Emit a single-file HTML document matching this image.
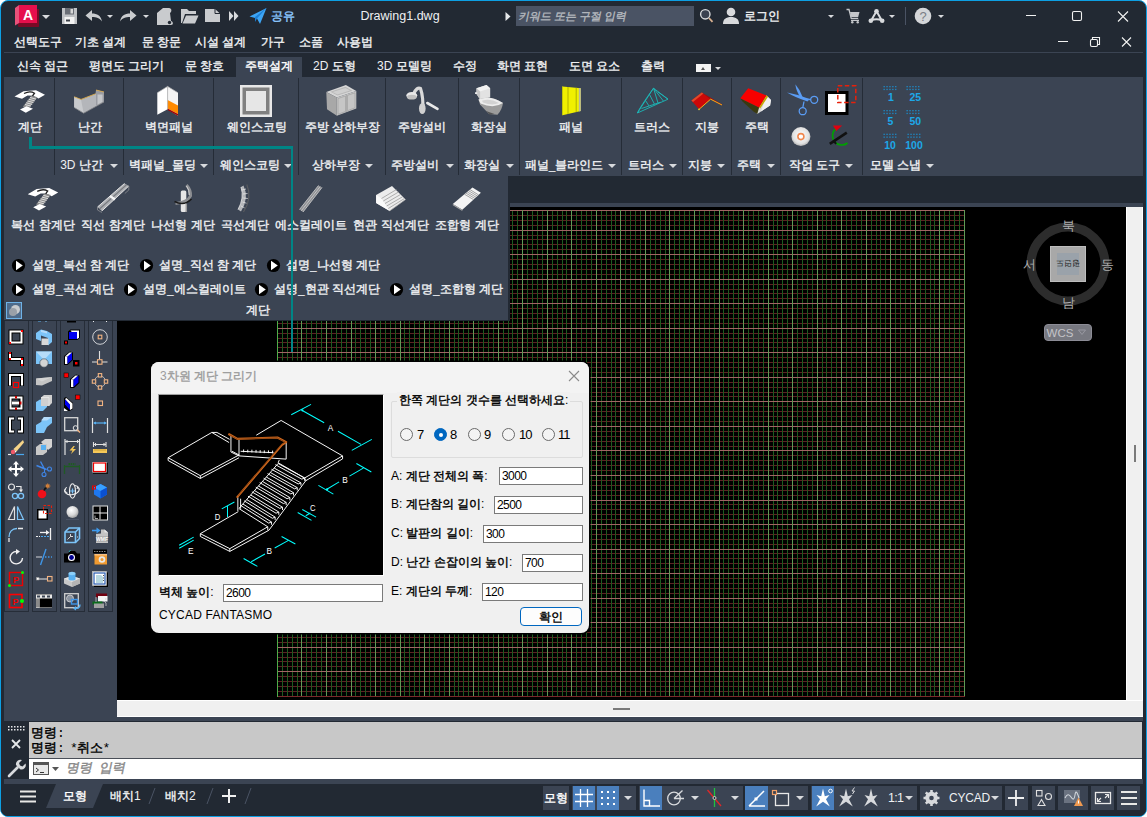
<!DOCTYPE html>
<html lang="ko">
<head>
<meta charset="utf-8">
<title>Drawing1.dwg</title>
<style>
html,body{margin:0;padding:0;background:#fff;}
body{width:1147px;height:817px;overflow:hidden;font-family:"Liberation Sans",sans-serif;font-size:12px;color:#eef0f2;}
#app{position:absolute;left:0;top:0;width:1145px;height:815px;background:#222933;border:1px solid #0d9fe3;border-radius:8px;overflow:hidden;}
#in{position:absolute;left:-1px;top:-1px;width:1147px;height:817px;}
.abs{position:absolute;}
.t{position:absolute;white-space:nowrap;text-align:center;line-height:16px;height:16px;font-size:12px;color:#eef0f2;overflow:visible;}
.l{text-align:left;}
.k{display:inline-block;width:1em;text-align:center;-webkit-text-stroke:0.4px currentColor;}
.cm .k{font-family:"Liberation Sans",sans-serif;letter-spacing:0;-webkit-text-stroke:0.45px currentColor;}
.pan{background:#3b4453;}
.sep{position:absolute;width:1px;background:#252c37;}
.dk{color:#000;}
svg{display:block;overflow:visible;}
.arr{position:absolute;width:0;height:0;border-left:4px solid transparent;border-right:4px solid transparent;border-top:4px solid #d8dadd;}
.arrs{position:absolute;width:0;height:0;border-left:3px solid transparent;border-right:3px solid transparent;border-top:3px solid #d8dadd;}
.inp{position:absolute;background:#fff;border:1px solid #7a7a7a;height:18px;box-sizing:border-box;font-size:12px;line-height:16px;color:#000;padding-left:2px;text-align:left;letter-spacing:-0.6px;}
.rb{position:absolute;width:13px;height:13px;border:1px solid #6a6a6a;border-radius:50%;background:#f4f4f4;box-sizing:border-box;}
.sb{position:absolute;top:786px;height:24px;background:#3b4453;}
.sbon{background:#4a7fbd;}
</style>
</head>
<body>
<div id="app"><div id="in">
<!-- ===== title bar ===== -->
<div class="abs" id="titlebar" style="left:1px;top:1px;width:1145px;height:37px;"></div>
<!-- app logo -->
<svg class="abs" style="left:14px;top:4px" width="28" height="25" viewBox="0 0 28 25">
<polygon points="3,19 24,19 25,23 4.5,23" fill="#7a0a26"/>
<polygon points="1,4 5,1 5,19 1,21.5" fill="#e8527a"/>
<rect x="5" y="1" width="18" height="18" fill="#e60f4c"/>
<rect x="23" y="5" width="2" height="17" fill="#7a0a26"/>
<text x="14" y="15.5" font-family="Liberation Sans, sans-serif" font-weight="bold" font-size="14" fill="#fff" text-anchor="middle">A</text>
</svg>
<div class="arr" style="left:42px;top:15px;"></div>
<!-- save -->
<svg class="abs" style="left:61px;top:7px" width="17" height="18" viewBox="0 0 17 18"><path d="M1 1h15v16H1z" fill="#bfc1c4"/><rect x="4" y="1" width="9" height="6.500" fill="#6a6e76"/><rect x="9.500" y="2" width="2.500" height="4.500" fill="#d8d8d8"/><rect x="3.500" y="10" width="10" height="7" fill="#f2f2f2"/><rect x="5" y="12.500" width="4" height="2" fill="#3a3e46"/></svg>
<!-- undo -->
<svg class="abs" style="left:85px;top:9px" width="18" height="14" viewBox="0 0 18 14"><path d="M0.5 6.5L7 1v3.5c5 0 9 2 10 8-2.5-3.5-5.5-4.5-10-4.5V12z" fill="#c9cbce"/></svg>
<div class="arrs" style="left:107px;top:15px;"></div>
<!-- redo -->
<svg class="abs" style="left:119px;top:9px" width="18" height="14" viewBox="0 0 18 14"><path d="M17.5 6.5L11 1v3.5c-5 0-9 2-10 8 2.500-3.500 5.500-4.500 10-4.500V12z" fill="#c9cbce"/></svg>
<div class="arrs" style="left:143px;top:15px;"></div>
<!-- roll -->
<svg class="abs" style="left:156px;top:7px" width="18" height="19" viewBox="0 0 18 19"><path d="M1 18V6l6-5h6c3 0 3 4 1 5l1 8c2 0 3 4 0 4z" fill="#c9cbce"/><circle cx="13.500" cy="15.500" r="1.700" fill="#222933"/></svg>
<!-- open -->
<svg class="abs" style="left:180px;top:8px" width="19" height="16" viewBox="0 0 19 16"><path d="M1 15V1h6l2 2h7v3H5l-3 9z" fill="#c9cbce"/><path d="M6 7.500h12.500l-3.500 8H2.500z" fill="#c9cbce"/></svg>
<!-- new doc -->
<svg class="abs" style="left:204px;top:8px" width="17" height="15" viewBox="0 0 17 15"><path d="M1 1h10l5 4.500V14H1z" fill="#c9cbce"/><path d="M11 1v4.500h5" fill="none" stroke="#222933" stroke-width="1"/></svg>
<!-- >> -->
<svg class="abs" style="left:229px;top:11px" width="10" height="10" viewBox="0 0 10 10"><path d="M0 0l4.500 5L0 10zM5 0l4.500 5L5 10z" fill="#d8dadd"/></svg>
<!-- share -->
<svg class="abs" style="left:249px;top:7px" width="18" height="18" viewBox="0 0 18 18"><path d="M0.500 9.500L17.500 1 11 17l-3-5.500z" fill="#3da5f5"/><path d="M8 11.500L17.500 1 6 10v5z" fill="#1b7fd6"/></svg>
<div class="t l" style="left:271px;top:8px;color:#8cc8ff;"><span class="k">공</span><span class="k">유</span></div>
<div class="t" style="left:340px;top:8px;width:120px;color:#eef0f2;font-size:12.500px;">Drawing1.dwg</div>
<svg class="abs" style="left:505px;top:12px" width="6" height="9" viewBox="0 0 6 9"><path d="M0.500 0l5 4.500-5 4.500z" fill="#e6e8ea"/></svg>
<!-- search box -->
<div class="abs" style="left:516px;top:6px;width:178px;height:20px;background:#4a5364;"></div>
<div class="t l" style="left:519px;top:8px;color:#b4b8be;font-size:11px;transform:skewX(-12deg);"><span class="k">키</span><span class="k">워</span><span class="k">드</span> <span class="k">또</span><span class="k">는</span> <span class="k">구</span><span class="k">절</span> <span class="k">입</span><span class="k">력</span></div>
<svg class="abs" style="left:699px;top:8px" width="17" height="17" viewBox="0 0 17 17"><circle cx="6.300" cy="6.300" r="4.700" fill="#3a4150" stroke="#d8dadd" stroke-width="1.400"/><path d="M10 10l3.500 3.800" stroke="#d8b090" stroke-width="1.800"/></svg>
<!-- user -->
<svg class="abs" style="left:722px;top:7px" width="18" height="17" viewBox="0 0 18 17"><circle cx="9" cy="5" r="4.300" fill="#d8dadd"/><path d="M1 17c0-5 3-7 8-7s8 2 8 7z" fill="#d8dadd"/></svg>
<div class="t l" style="left:744px;top:8px;"><span class="k">로</span><span class="k">그</span><span class="k">인</span></div>
<div class="arrs" style="left:828px;top:15px;"></div>
<!-- cart -->
<svg class="abs" style="left:845px;top:7px" width="17" height="18" viewBox="0 0 17 18"><path d="M1.500 2.500h2.500l2.200 8.800h7" fill="none" stroke="#c4c6ca" stroke-width="1.300"/><path d="M5 5h9.500l-1.300 5h-7z" fill="#c4c6ca"/><path d="M6 13.300h8" stroke="#c4c6ca" stroke-width="1.200"/><circle cx="7.300" cy="15.300" r="1.200" fill="#c4c6ca"/><circle cx="12.700" cy="15.300" r="1.200" fill="#c4c6ca"/></svg>
<!-- autodesk A -->
<svg class="abs" style="left:867px;top:7px" width="18" height="18" viewBox="0 0 18 18"><path d="M9.500 4.300L4 13.700Q9.500 11 15 13.700z" fill="none" stroke="#d8dadd" stroke-width="2" stroke-linejoin="round"/><circle cx="9.500" cy="4.300" r="2.300" fill="#d8dadd"/><circle cx="3.800" cy="13.800" r="2.300" fill="#d8dadd"/><circle cx="15.200" cy="13.800" r="2.300" fill="#d8dadd"/></svg>
<div class="arrs" style="left:889px;top:15px;"></div>
<div class="abs" style="left:905px;top:7px;width:1px;height:18px;background:#4a5364;"></div>
<!-- help -->
<svg class="abs" style="left:914px;top:7px" width="18" height="18" viewBox="0 0 18 18"><circle cx="9" cy="9" r="8.300" fill="#d4d6d9"/><text x="9" y="13.500" font-family="Liberation Sans, sans-serif" font-size="13" fill="#7a7e86" text-anchor="middle">?</text></svg>
<div class="arrs" style="left:938px;top:15px;"></div>
<!-- window controls -->
<svg class="abs" style="left:1020px;top:6px" width="120" height="22" viewBox="0 0 120 22" fill="none" stroke="#f2f2f2" stroke-width="1.100"><path d="M6 9.500h10"/><rect x="52.500" y="5.500" width="9" height="9" rx="1.500"/><path d="M98 5.500l10 10M108 5.500l-10 10"/></svg>
<!-- ===== menu row ===== -->
<div class="t l" style="left:14px;top:34px;"><span class="k">선</span><span class="k">택</span><span class="k">도</span><span class="k">구</span></div>
<div class="t l" style="left:75px;top:34px;"><span class="k">기</span><span class="k">초</span> <span class="k">설</span><span class="k">계</span></div>
<div class="t l" style="left:142px;top:34px;"><span class="k">문</span> <span class="k">창</span><span class="k">문</span></div>
<div class="t l" style="left:195px;top:34px;"><span class="k">시</span><span class="k">설</span> <span class="k">설</span><span class="k">계</span></div>
<div class="t l" style="left:261px;top:34px;"><span class="k">가</span><span class="k">구</span></div>
<div class="t l" style="left:299px;top:34px;"><span class="k">소</span><span class="k">품</span></div>
<div class="t l" style="left:337px;top:34px;"><span class="k">사</span><span class="k">용</span><span class="k">법</span></div>
<svg class="abs" style="left:1055px;top:34px" width="85" height="16" viewBox="0 0 85 16" fill="none" stroke="#f2f2f2" stroke-width="1.100"><path d="M3 7.500h10"/><rect x="35.500" y="5.500" width="7" height="7" rx="1.500"/><path d="M37.500 5.500v-2h7v7h-2"/><path d="M67 3.500l9 9M76 3.500l-9 9"/></svg>
<div class="abs" style="left:4px;top:52px;width:1139px;height:1px;background:#3b4453;"></div>
<!-- ===== tab row ===== -->
<div class="abs pan" style="left:236px;top:57px;width:66px;height:21px;"></div>
<div class="t l" style="left:17px;top:58px;"><span class="k">신</span><span class="k">속</span> <span class="k">접</span><span class="k">근</span></div>
<div class="t l" style="left:89px;top:58px;"><span class="k">평</span><span class="k">면</span><span class="k">도</span> <span class="k">그</span><span class="k">리</span><span class="k">기</span></div>
<div class="t l" style="left:185px;top:58px;"><span class="k">문</span> <span class="k">창</span><span class="k">호</span></div>
<div class="t l" style="left:245px;top:58px;color:#fff;"><span class="k">주</span><span class="k">택</span><span class="k">설</span><span class="k">계</span></div>
<div class="t l" style="left:313px;top:58px;">2D <span class="k">도</span><span class="k">형</span></div>
<div class="t l" style="left:377px;top:58px;">3D <span class="k">모</span><span class="k">델</span><span class="k">링</span></div>
<div class="t l" style="left:453px;top:58px;"><span class="k">수</span><span class="k">정</span></div>
<div class="t l" style="left:497px;top:58px;"><span class="k">화</span><span class="k">면</span> <span class="k">표</span><span class="k">현</span></div>
<div class="t l" style="left:569px;top:58px;"><span class="k">도</span><span class="k">면</span> <span class="k">요</span><span class="k">소</span></div>
<div class="t l" style="left:641px;top:58px;"><span class="k">출</span><span class="k">력</span></div>
<div class="abs" style="left:696px;top:64px;width:15px;height:8px;background:#f4f4f4;"></div>
<div class="abs" style="left:701px;top:66.500px;width:0;height:0;border-left:2.500px solid transparent;border-right:2.500px solid transparent;border-bottom:3px solid #555;"></div>
<div class="arrs" style="left:715px;top:67px;"></div>
<!-- ===== ribbon ===== -->
<div class="abs pan" style="left:4px;top:77px;width:1139px;height:99px;"></div>
<div class="sep" style="left:54px;top:78px;height:97px;"></div>
<div class="sep" style="left:123px;top:78px;height:97px;"></div>
<div class="sep" style="left:213px;top:78px;height:97px;"></div>
<div class="sep" style="left:298px;top:78px;height:97px;"></div>
<div class="sep" style="left:385px;top:78px;height:97px;"></div>
<div class="sep" style="left:458px;top:78px;height:97px;"></div>
<div class="sep" style="left:519px;top:78px;height:97px;"></div>
<div class="sep" style="left:621px;top:78px;height:97px;"></div>
<div class="sep" style="left:682px;top:78px;height:97px;"></div>
<div class="sep" style="left:731px;top:78px;height:97px;"></div>
<div class="sep" style="left:780px;top:78px;height:97px;"></div>
<div class="sep" style="left:862px;top:78px;height:97px;"></div>
<!-- big button labels -->
<div class="t" style="left:5px;top:119px;width:50px;"><span class="k">계</span><span class="k">단</span></div>
<div class="t" style="left:56px;top:119px;width:67px;"><span class="k">난</span><span class="k">간</span></div>
<div class="t" style="left:124px;top:119px;width:89px;"><span class="k">벽</span><span class="k">면</span><span class="k">패</span><span class="k">널</span></div>
<div class="t" style="left:214px;top:119px;width:85px;"><span class="k">웨</span><span class="k">인</span><span class="k">스</span><span class="k">코</span><span class="k">팅</span></div>
<div class="t" style="left:300px;top:119px;width:85px;"><span class="k">주</span><span class="k">방</span> <span class="k">상</span><span class="k">하</span><span class="k">부</span><span class="k">장</span></div>
<div class="t" style="left:386px;top:119px;width:72px;"><span class="k">주</span><span class="k">방</span><span class="k">설</span><span class="k">비</span></div>
<div class="t" style="left:459px;top:119px;width:60px;"><span class="k">화</span><span class="k">장</span><span class="k">실</span></div>
<div class="t" style="left:520px;top:119px;width:101px;"><span class="k">패</span><span class="k">널</span></div>
<div class="t" style="left:622px;top:119px;width:60px;"><span class="k">트</span><span class="k">러</span><span class="k">스</span></div>
<div class="t" style="left:683px;top:119px;width:48px;"><span class="k">지</span><span class="k">붕</span></div>
<div class="t" style="left:732px;top:119px;width:49px;"><span class="k">주</span><span class="k">택</span></div>
<!-- panel titles -->
<div class="t" style="left:54px;top:157px;width:55px;">3D <span class="k">난</span><span class="k">간</span></div><div class="arr" style="left:110px;top:164px;"></div>
<div class="t" style="left:124px;top:157px;width:77px;"><span class="k">벽</span><span class="k">패</span><span class="k">널</span>_<span class="k">몰</span><span class="k">딩</span></div><div class="arr" style="left:200px;top:164px;"></div>
<div class="t" style="left:214px;top:157px;width:71px;"><span class="k">웨</span><span class="k">인</span><span class="k">스</span><span class="k">코</span><span class="k">팅</span></div><div class="arr" style="left:284px;top:164px;"></div>
<div class="t" style="left:306px;top:157px;width:59px;"><span class="k">상</span><span class="k">하</span><span class="k">부</span><span class="k">장</span></div><div class="arr" style="left:365px;top:164px;"></div>
<div class="t" style="left:385px;top:157px;width:59px;"><span class="k">주</span><span class="k">방</span><span class="k">설</span><span class="k">비</span></div><div class="arr" style="left:446px;top:164px;"></div>
<div class="t" style="left:459px;top:157px;width:46px;"><span class="k">화</span><span class="k">장</span><span class="k">실</span></div><div class="arr" style="left:506px;top:164px;"></div>
<div class="t" style="left:521px;top:157px;width:86px;"><span class="k">패</span><span class="k">널</span>_<span class="k">블</span><span class="k">라</span><span class="k">인</span><span class="k">드</span></div><div class="arr" style="left:608px;top:164px;"></div>
<div class="t" style="left:623px;top:157px;width:46px;"><span class="k">트</span><span class="k">러</span><span class="k">스</span></div><div class="arr" style="left:669px;top:164px;"></div>
<div class="t" style="left:683px;top:157px;width:33px;"><span class="k">지</span><span class="k">붕</span></div><div class="arr" style="left:717px;top:164px;"></div>
<div class="t" style="left:732px;top:157px;width:33px;"><span class="k">주</span><span class="k">택</span></div><div class="arr" style="left:767px;top:164px;"></div>
<div class="t" style="left:784px;top:157px;width:61px;"><span class="k">작</span><span class="k">업</span> <span class="k">도</span><span class="k">구</span></div><div class="arr" style="left:845px;top:164px;"></div>
<div class="t" style="left:865px;top:157px;width:61px;"><span class="k">모</span><span class="k">델</span> <span class="k">스</span><span class="k">냅</span></div><div class="arr" style="left:926px;top:164px;"></div>
<!-- ribbon icons placeholder -->
<svg class="abs" style="left:0;top:78px" width="960" height="80" viewBox="0 78 960 80">
<defs>
<g id="stair1">
<path d="M14.500 96.500L23.500 91.200 36 90.300 45 94.800 38.500 98.500 33 95.800 27.500 95.600 22 98.700z" fill="#fff"/>
<path d="M31.500 95.500L37.500 97.200 28.500 108.500 22.800 106.800z" fill="#8c8c8c"/>
<path d="M30 97.500l6 1.600M28.800 99.300l6 1.600M27.500 101l6 1.600M26.200 102.800l6 1.600M25 104.500l6 1.600" stroke="#e8e8e8" stroke-width="0.900"/>
<path d="M20 109.500L26.500 106.300 33 108.800 25.800 112.800z" fill="#fff"/>
<path d="M24 93.500Q30 90.500 34.500 93.200L32.500 96" fill="none" stroke="#222" stroke-width="1.300"/>
</g>
</defs>
<use href="#stair1"/>
<!-- railing -->
<path d="M74.200 96.800L81 99.400 95.600 93.800 96 90 104 92V102L83.700 113.200 74.200 107.500z" fill="#b4b6ba"/>
<path d="M81 99.400L83.700 113.200 74.200 107.500 74.200 96.800z" fill="#c8cacd"/>
<path d="M96 90l8 2v10l-8 3.500z" fill="#9a9ca2"/>
<path d="M97.500 94.500h5v7.500l-5 2.500z" fill="#c4c6c9"/>
<path d="M74.200 96.800L81 99.400 95.600 93.800M96 90l8 2" fill="none" stroke="#d8a848" stroke-width="0.900"/>
<path d="M74.200 107.500l9.500 5.700L104 102" fill="none" stroke="#7a7c80" stroke-width="0.800"/>
<!-- wall panel -->
<path d="M157.300 92.800L167.600 86.400V109.300L157.300 114.800z" fill="#fff"/>
<path d="M167.600 86.400L178 92.800V115.700L167.600 109.300z" fill="#f4f4f4"/>
<path d="M167.600 100.100L178 105.600V113.900L167.600 108.400z" fill="#ff8a00"/>
<path d="M167.600 108.400L178 113.900V115.700L167.600 109.900z" fill="#a00000"/>
<path d="M157.300 92.800L167.600 86.400 178 92.800M167.600 86.400V109.300" fill="none" stroke="#b8b8b8" stroke-width="0.700"/>
<!-- wainscoting -->
<rect x="240" y="85" width="32" height="32" fill="#e8e8e8"/>
<rect x="242.500" y="87.500" width="27" height="27" fill="#808080"/>
<rect x="246" y="91" width="20" height="20" fill="#e6e6e6"/>
<!-- kitchen cabinet -->
<path d="M326.300 91.900L345.900 85.100 356.300 91 336.800 97.400z" fill="#d6d6d6"/>
<path d="M330.500 91.800L345.500 86.800 352.500 90.800 337.500 95.600z" fill="#b8b8b8"/>
<path d="M332.500 92L345.500 88 350 90.600 337.500 94.600z" fill="#cfcfcf"/>
<path d="M336.800 97.400L356.300 91V108.400L336.800 115.700z" fill="#c6c6c6"/>
<path d="M326.300 91.900L336.800 97.400V115.700L327 109.300z" fill="#a8a8a8"/>
<path d="M346.500 94.500V112M338 98.500L345.500 96V111.500L338 114.300zM347.500 95.300L355 92.800V107.800L347.500 110.700z" fill="none" stroke="#a0a0a0" stroke-width="0.700"/>
<!-- faucet -->
<path d="M413.500 94Q417 86.500 420.500 88.500 423.500 97 422.800 111" fill="none" stroke="#dadada" stroke-width="3.200" stroke-linecap="round"/>
<ellipse cx="422.300" cy="108.500" rx="3.300" ry="5.500" fill="#d0d0d0"/>
<ellipse cx="411.800" cy="95.500" rx="5.500" ry="3.500" fill="#e8e8e8"/>
<ellipse cx="411.800" cy="97.200" rx="4.800" ry="2.400" fill="#c0c0c0"/>
<path d="M427.300 103L437.500 108.800" stroke="#e8e8e8" stroke-width="2.600" stroke-linecap="round"/>
<!-- toilet -->
<path d="M476.500 88.200L486.500 85.100 490.200 88.200V97.400L480.100 99.500 476.500 94z" fill="#e2e2e2"/>
<path d="M476.500 88.200L486.500 85.100 490.200 88.200 480.100 91.500z" fill="#f2f2f2"/>
<path d="M480.100 91.500V99.500L476.500 94V88.200z" fill="#c4c4c4"/>
<path d="M478.500 99.500Q490 94.500 503 103 502 110 497.500 114.800L489 114 480 104.500z" fill="#9c9c9c"/>
<path d="M478.500 99.500Q490 94.500 503 103 494 109 480.500 103.500z" fill="#ececec"/>
<path d="M482 100.700Q490 97.800 499 103 492 106 483 102.500z" fill="#d2d2d2"/>
<path d="M486 111l3.500 3.500 5-0.500z" fill="#555"/>
<rect x="475" y="92.300" width="2.200" height="1.600" fill="#f4f4f4"/>
<!-- yellow panel -->
<path d="M562.500 86.400L580.800 88.200V111.100L562.500 115.200z" fill="#f0f000"/>
<path d="M578.800 88V111.600L580.800 111.100V88.200z" fill="#b8b89a"/>
<path d="M568 87V114M576.200 87.800V112.100" stroke="#a8a800" stroke-width="0.900"/>
<path d="M562.500 86.400V115.200" stroke="#d0d000" stroke-width="0.800"/>
<!-- truss -->
<g fill="none" stroke="#1cb8b8" stroke-width="0.900">
<path d="M637.400 113L653.500 88.200 668 99.200z"/>
<path d="M637.400 113Q640 107 653.500 88.200M641.500 108.500L660.500 102.200M645.500 100.500L649 106M649.500 94.500L654.500 104.200M653.500 88.200L658 103M653.500 88.200L663.500 101.200M658 92L668 99.200"/>
</g>
<!-- roof -->
<path d="M691.400 100.500L701.800 92.400 710.600 99.200 699.100 109.300z" fill="#cc0808"/>
<path d="M691.400 100.500L701.800 92.400 703.500 93.500 693 102z" fill="#e04a2a"/>
<path d="M701.800 92.400L722.500 104.700 721.300 105.300 710.600 99.200z" fill="#b80000"/>
<path d="M699.100 109.300L710.600 99.200 722 105" fill="none" stroke="#e8b820" stroke-width="1"/>
<circle cx="699" cy="109.300" r="0.900" fill="#e8d020"/>
<!-- house -->
<path d="M759.100 107.500L766.500 95.600 771 100.100 770.100 105.600 757.300 113.900 754.600 111.100z" fill="#d8d8d8"/>
<path d="M766.500 95.600L771 100.100 770.100 105.600 761 111.500z" fill="#f0f0f0"/>
<path d="M740.300 98.300L759.100 107.500 757.300 113.900 753.500 111.500 742.500 101.500z" fill="#3a3a10"/>
<path d="M740.300 98.300L748.200 88.200 766.500 95.600 759.100 107.500z" fill="#f80000"/>
<path d="M759.100 107.500L766.500 95.600 768.200 96.500 760.200 108.500z" fill="#c8a800"/>
<!-- scissors -->
<g fill="none" stroke="#5a9cf4" stroke-width="1.300">
<circle cx="814.200" cy="99.800" r="3.500"/><circle cx="802.700" cy="111.200" r="3.500"/>
<path d="M810.800 99.500L805 99.300M802.800 107.700L804 101.500"/>
</g>
<path d="M795.300 84.300Q799.500 89 802.500 96.800L801 98.500Q796 91 795.300 84.300z" fill="#5a9cf4"/>
<path d="M787 92.600Q798 94.500 809.500 99L807.500 101.500Q795 97.500 787 92.600z" fill="#5a9cf4"/>
<!-- white square + dashed -->
<rect x="825" y="91" width="23.500" height="24" fill="#000"/>
<rect x="828" y="94" width="17.500" height="18" fill="#fff"/>
<rect x="837.800" y="85.800" width="18" height="16.800" fill="none" stroke="#e8200a" stroke-width="1.500" stroke-dasharray="4.500 2.500"/>
<!-- CD -->
<defs><radialGradient id="cdg" cx="0.500" cy="0.450" r="0.550"><stop offset="0" stop-color="#fff"/><stop offset="0.750" stop-color="#e2e2e2"/><stop offset="1" stop-color="#b0b0b0"/></radialGradient></defs>
<circle cx="800.900" cy="136.600" r="9.500" fill="url(#cdg)"/>
<circle cx="800.900" cy="136.600" r="3" fill="#fff" stroke="#f08850" stroke-width="1.600"/>
<!-- rotate -->
<path d="M836 128.500A8.700 8.700 0 1 0 847.500 143" fill="none" stroke="#00a000" stroke-width="1.700"/>
<path d="M833 125.400H842.200L836.300 131z" fill="#e00010"/>
<path d="M829.800 143.800L846.800 132.600" stroke="#111" stroke-width="2.600"/>
<path d="M833.500 140l2.500 4" stroke="#111" stroke-width="2"/>
<!-- snap numbers -->
<g fill="#1d8ac8">
<g id="dots"><rect x="883.500" y="86" width="1.300" height="1.300"/><rect x="886.400" y="86" width="1.300" height="1.300"/><rect x="889.300" y="86" width="1.300" height="1.300"/><rect x="892.200" y="86" width="1.300" height="1.300"/><rect x="895.100" y="86" width="1.300" height="1.300"/><rect x="883.500" y="88.800" width="1.300" height="1.300"/><rect x="886.400" y="88.800" width="1.300" height="1.300"/><rect x="889.300" y="88.800" width="1.300" height="1.300"/><rect x="892.200" y="88.800" width="1.300" height="1.300"/><rect x="895.100" y="88.800" width="1.300" height="1.300"/></g>
<use href="#dots" x="23"/><use href="#dots" y="24"/><use href="#dots" x="23" y="24"/><use href="#dots" y="47.700"/><use href="#dots" x="24" y="47.700"/>
</g>
<g font-family="Liberation Sans, sans-serif" font-weight="bold" font-size="10.500" fill="#1da8e8" text-anchor="middle">
<text x="891" y="100.500">1</text><text x="915.300" y="100.500">25</text>
<text x="890.300" y="125">5</text><text x="915.300" y="125">50</text>
<text x="890" y="148.700">10</text><text x="914" y="148.700">100</text>
</g>
</svg>

<!-- canvas --><!-- ===== drawing area ===== -->
<div class="abs pan" style="left:4px;top:203px;width:1139px;height:4px;"></div>
<div class="abs" style="left:117px;top:207px;width:1009px;height:493px;background:#000;"></div>
<svg class="abs" style="left:0;top:0" width="1147" height="817" shape-rendering="crispEdges" fill="none"><path stroke="#5c2222" d="M277 215.5H965M277 220.5H965M277 225.5H965M277 235.5H965M277 239.5H965M277 244.5H965M277 249.5H965M277 259.5H965M277 264.5H965M277 269.5H965M277 274.5H965M277 284.5H965M277 289.5H965M277 293.5H965M277 298.5H965M277 308.5H965M277 313.5H965M277 318.5H965M277 323.5H965M277 333.5H965M277 338.5H965M277 342.5H965M277 347.5H965M277 357.5H965M277 362.5H965M277 367.5H965M277 372.5H965M277 382.5H965M277 387.5H965M277 392.5H965M277 396.5H965M277 406.5H965M277 411.5H965M277 416.5H965M277 421.5H965M277 431.5H965M277 436.5H965M277 441.5H965M277 446.5H965M277 455.5H965M277 460.5H965M277 465.5H965M277 470.5H965M277 480.5H965M277 485.5H965M277 490.5H965M277 495.5H965M277 504.5H965M277 509.5H965M277 514.5H965M277 519.5H965M277 529.5H965M277 534.5H965M277 539.5H965M277 544.5H965M277 553.5H965M277 558.5H965M277 563.5H965M277 568.5H965M277 578.5H965M277 583.5H965M277 588.5H965M277 593.5H965M277 603.5H965M277 607.5H965M277 612.5H965M277 617.5H965M277 627.5H965M277 632.5H965M277 637.5H965M277 642.5H965M277 652.5H965M277 657.5H965M277 661.5H965M277 666.5H965M277 676.5H965M277 681.5H965M277 686.5H965M277 691.5H965"/><path stroke="#1f5a1f" d="M282.5 210V697M287.5 210V697M292.5 210V697M297.5 210V697M306.5 210V697M311.5 210V697M316.5 210V697M321.5 210V697M331.5 210V697M336.5 210V697M341.5 210V697M346.5 210V697M355.5 210V697M360.5 210V697M365.5 210V697M370.5 210V697M380.5 210V697M385.5 210V697M390.5 210V697M395.5 210V697M404.5 210V697M409.5 210V697M414.5 210V697M419.5 210V697M429.5 210V697M434.5 210V697M439.5 210V697M444.5 210V697M454.5 210V697M458.5 210V697M463.5 210V697M468.5 210V697M478.5 210V697M483.5 210V697M488.5 210V697M493.5 210V697M503.5 210V697M508.5 210V697M512.5 210V697M517.5 210V697M527.5 210V697M532.5 210V697M537.5 210V697M542.5 210V697M552.5 210V697M557.5 210V697M562.5 210V697M566.5 210V697M576.5 210V697M581.5 210V697M586.5 210V697M591.5 210V697M601.5 210V697M606.5 210V697M611.5 210V697M615.5 210V697M625.5 210V697M630.5 210V697M635.5 210V697M640.5 210V697M650.5 210V697M655.5 210V697M660.5 210V697M665.5 210V697M674.5 210V697M679.5 210V697M684.5 210V697M689.5 210V697M699.5 210V697M704.5 210V697M709.5 210V697M714.5 210V697M723.5 210V697M728.5 210V697M733.5 210V697M738.5 210V697M748.5 210V697M753.5 210V697M758.5 210V697M763.5 210V697M773.5 210V697M777.5 210V697M782.5 210V697M787.5 210V697M797.5 210V697M802.5 210V697M807.5 210V697M812.5 210V697M822.5 210V697M826.5 210V697M831.5 210V697M836.5 210V697M846.5 210V697M851.5 210V697M856.5 210V697M861.5 210V697M871.5 210V697M876.5 210V697M880.5 210V697M885.5 210V697M895.5 210V697M900.5 210V697M905.5 210V697M910.5 210V697M920.5 210V697M925.5 210V697M930.5 210V697M934.5 210V697M944.5 210V697M949.5 210V697M954.5 210V697M959.5 210V697"/><path stroke="#a06464" d="M277 210.5H965M277 230.5H965M277 254.5H965M277 279.5H965M277 303.5H965M277 328.5H965M277 352.5H965M277 377.5H965M277 401.5H965M277 426.5H965M277 450.5H965M277 475.5H965M277 500.5H965M277 524.5H965M277 549.5H965M277 573.5H965M277 598.5H965M277 622.5H965M277 647.5H965M277 671.5H965M277 696.5H965"/><path stroke="#5f9a55" d="M277.5 210V697M301.5 210V697M326.5 210V697M351.5 210V697M375.5 210V697M400.5 210V697M424.5 210V697M449.5 210V697M473.5 210V697M498.5 210V697M522.5 210V697M547.5 210V697M571.5 210V697M596.5 210V697M620.5 210V697M645.5 210V697M669.5 210V697M694.5 210V697M719.5 210V697M743.5 210V697M768.5 210V697M792.5 210V697M817.5 210V697M841.5 210V697M866.5 210V697M890.5 210V697M915.5 210V697M939.5 210V697M964.5 210V697"/><path stroke="#7a2a2a" d="M277 696.5H965"/><path stroke="#4fae4a" d="M277.5 210V697"/></svg><!-- scrollbars -->
<div class="abs" style="left:1126px;top:207px;width:17px;height:510px;background:#f0f0f0;border-left:1px solid #fff;border-right:1px solid #fff;box-sizing:border-box;"></div>
<div class="abs" style="left:117px;top:700px;width:1026px;height:17px;background:#f0f0f0;border-top:1px solid #fff;border-bottom:1px solid #fff;box-sizing:border-box;"></div>
<div class="abs" style="left:613px;top:708px;width:17px;height:2px;background:#7a7a7a;"></div>
<div class="abs" style="left:1134px;top:445px;width:2px;height:17px;background:#7a7a7a;"></div>
<!-- viewcube -->
<svg class="abs" style="left:1015px;top:212px" width="110" height="135" viewBox="0 0 110 135">
<circle cx="53" cy="52" r="37" fill="none" stroke="#2c2c2c" stroke-width="9"/>
<rect x="35.500" y="34.500" width="35" height="35" fill="#a8a8a8" stroke="#bdbdbd" stroke-width="1"/>
<rect x="42" y="41" width="22" height="22" fill="#9aa2aa"/>
<text x="53" y="56" font-family="Liberation Sans, sans-serif" font-size="8" fill="#222" text-anchor="middle" transform="rotate(180 53 52.500)">평면도</text>
<text x="53" y="18" font-family="Liberation Sans, sans-serif" font-size="13" fill="#b0b0b0" text-anchor="middle">북</text>
<text x="53" y="95" font-family="Liberation Sans, sans-serif" font-size="13" fill="#b0b0b0" text-anchor="middle">남</text>
<text x="14" y="57" font-family="Liberation Sans, sans-serif" font-size="13" fill="#b0b0b0" text-anchor="middle">서</text>
<text x="92" y="57" font-family="Liberation Sans, sans-serif" font-size="13" fill="#b0b0b0" text-anchor="middle">동</text>
<rect x="29.500" y="112.500" width="47" height="16" rx="3.500" fill="#777880" stroke="#8c8c96"/>
<text x="45" y="125" font-family="Liberation Sans, sans-serif" font-size="11.500" fill="#c4c4c8" text-anchor="middle">WCS</text>
<path d="M63.500 118h7l-3.500 4.500z" fill="none" stroke="#a0a0a8" stroke-width="0.800"/>
</svg>
<!-- ===== left toolbars ===== -->
<div class="abs pan" style="left:4px;top:320px;width:113px;height:400px;"></div>
<div class="abs" style="left:4px;top:318px;width:25px;height:294px;border:1px solid #262d38;box-sizing:border-box;"></div>
<div class="abs" style="left:32px;top:318px;width:25px;height:294px;border:1px solid #262d38;box-sizing:border-box;"></div>
<div class="abs" style="left:60px;top:318px;width:25px;height:294px;border:1px solid #262d38;box-sizing:border-box;"></div>
<div class="abs" style="left:88px;top:318px;width:25px;height:294px;border:1px solid #262d38;box-sizing:border-box;"></div>
<svg class="abs" style="left:0;top:320px" width="120" height="300" viewBox="0 320 120 300"><rect x="38" y="320.500" width="3" height="1" fill="#58b0f0"/><rect x="45" y="320.500" width="2" height="1" fill="#7cc4f8"/><rect x="67" y="320" width="9" height="2.500" fill="#000"/><rect x="93" y="321" width="1" height="1" fill="#eee"/><rect x="106" y="321" width="1" height="1" fill="#eee"/><g transform="translate(8 329)"><rect x="0.5" y="0.5" width="15" height="15" fill="#000"/><rect x="1.500" y="1.500" width="13" height="13" fill="#fff"/><rect x="3.500" y="3.500" width="9" height="9" fill="#000"/><rect x="4.500" y="4.500" width="7" height="7" fill="#3b4453"/><rect x="13" y="1" width="2" height="2" fill="#f00"/><rect x="1" y="13" width="2" height="2" fill="#f00"/></g><g transform="translate(8 351)"><path d="M2 1v7h12v7" stroke="#000" stroke-width="4" fill="none"/><path d="M2 1.500v6.500h12v6.500" stroke="#fff" stroke-width="2" fill="none"/><rect x="1" y="1" width="2" height="2" fill="#f00"/><rect x="1" y="7" width="2" height="2" fill="#f00"/><rect x="13" y="7" width="2" height="2" fill="#f00"/><rect x="13" y="13" width="2" height="2" fill="#f00"/></g><g transform="translate(8 373)"><path d="M2 13V2h12v11" stroke="#000" stroke-width="4" fill="none"/><path d="M2 12.500V2h12v10.500" stroke="#fff" stroke-width="2" fill="none"/><rect x="5.500" y="9.500" width="5" height="5" fill="#3b4453" stroke="#f00" stroke-width="1.200"/></g><g transform="translate(8 395)"><rect x="0.500" y="0.500" width="15" height="15" fill="#000"/><rect x="1.500" y="1.500" width="13" height="13" fill="#fff"/><rect x="3.500" y="3.500" width="9" height="9" fill="#000"/><rect x="4" y="6.500" width="7" height="3" fill="#fff"/><rect x="4.500" y="4.500" width="6" height="1.500" fill="#3b4453"/><rect x="4.500" y="10" width="6" height="1.500" fill="#3b4453"/><rect x="7" y="1" width="2" height="2.500" fill="#c00"/><rect x="7" y="12.500" width="2" height="2.500" fill="#c00"/><rect x="11.500" y="6.500" width="2" height="3" fill="#c00"/></g><g transform="translate(8 417)"><path d="M6.500 1.500H2v13h4.500M9.500 1.500H14v13H9.500" stroke="#000" stroke-width="4" fill="none"/><path d="M6 1.500H2v13h4M10 1.500h4v13h-4" stroke="#fff" stroke-width="2" fill="none"/></g><g transform="translate(8 439)"><path d="M15 1l1 2.500-7.500 9-3-2.500z" fill="#f6d488"/><path d="M5.500 10l3 2.500-1.200 1.300z" fill="#fff"/><circle cx="5" cy="13" r="2.200" fill="#f25a6a"/><path d="M8 15.500h8" stroke="#4aa8f0" stroke-width="1.200"/><path d="M0 15.500h3" stroke="#e8e8e8" stroke-width="1.200"/></g><g transform="translate(8 461)"><path d="M8 0l3 3.500H9V7h3.500V5L16 8l-3.500 3V9H9v3.500h2L8 16l-3-3.500h2V9H3.500v2L0 8l3.500-3v2H7V3.500H5z" fill="#fff"/></g><g transform="translate(8 483)"><circle cx="3.500" cy="4" r="3" fill="none" stroke="#e8e8e8" stroke-width="1.200"/><path d="M8 3.500h5V8" stroke="#e8e8e8" stroke-width="1.200" fill="none"/><path d="M11 6.500h4L13 9.500z" fill="#e8e8e8"/><circle cx="7" cy="13" r="2.600" fill="none" stroke="#7cc4f8" stroke-width="1.300"/><circle cx="13" cy="13" r="2.600" fill="none" stroke="#7cc4f8" stroke-width="1.300"/></g><g transform="translate(8 505)"><path d="M6.500 1.500v13h-6z" fill="none" stroke="#e0e0e0" stroke-width="1.200"/><path d="M9.500 1.500v13h6z" fill="none" stroke="#7cc4f8" stroke-width="1.200"/></g><g transform="translate(8 527)"><path d="M1 10C1 5 4 1.500 9 1.500" fill="none" stroke="#7cc4f8" stroke-width="1.300"/><path d="M1 11v4M10 1.500h5" stroke="#e8e8e8" stroke-width="1.300"/></g><g transform="translate(8 549)"><path d="M8.500 2.500A6.200 6.200 0 1 0 14.500 9" fill="none" stroke="#f0f0f0" stroke-width="1.400"/><path d="M8 0l4 2.500L8 5.500z" fill="#f0f0f0"/></g><g transform="translate(8 571)"><rect x="1.500" y="1.500" width="13" height="13" fill="none" stroke="#e00" stroke-width="1.400"/><text x="8" y="12" font-family="Liberation Sans, sans-serif" font-weight="bold" font-size="9" fill="#e00" text-anchor="middle">P</text><circle cx="14.500" cy="1.500" r="1.500" fill="#0f0"/><circle cx="1.500" cy="14.500" r="1.500" fill="#0f0"/></g><g transform="translate(8 593)"><rect x="1.500" y="1.500" width="12.500" height="13" fill="none" stroke="#f00" stroke-width="1.600"/><text x="7.500" y="12" font-family="Liberation Sans, sans-serif" font-weight="bold" font-size="9" fill="#e00" text-anchor="middle">P</text><circle cx="14" cy="8" r="2" fill="#0f0"/></g><g transform="translate(36 329)"><path d="M0 4l5-3.500 6 1.500 5 3v8l-4 3.500V9L5 6.500v5.500L0 10z" fill="#7cc4f8"/><path d="M5 1l6 1.500v2L5 3z" fill="#b6dcfa"/><rect x="5.500" y="9.500" width="7" height="6.500" fill="#d8d8d8"/></g><g transform="translate(36 351)"><path d="M0 0.500h16V13H0z" fill="#7cc4f8"/><path d="M0 0.500h16L8 9z" fill="#b6dcfa"/><circle cx="8" cy="12" r="4.200" fill="#d4d4d4" stroke="#3b4453" stroke-width="0.600"/></g><g transform="translate(36 373)"><path d="M0 5.500L16 4v4l-10 4.500-6-0.500z" fill="#c4c4c4"/><path d="M0 5.500L16 4 6 8.500z" fill="#dcdcdc" opacity="0.700"/></g><g transform="translate(36 395)"><path d="M0 7l4-2.500h7V12l-4 4H0z" fill="#7cc4f8"/><path d="M5 2.500L8 0h8v8l-3 3H5z" fill="#d0d0d0"/><path d="M5 2.500h8V11" fill="none" stroke="#e8e8e8" stroke-width="0.800"/></g><g transform="translate(36 417)"><path d="M0 8l5-3 3-5h8v6l-5 4-3 6H0z" fill="#7cc4f8"/><path d="M8 0h8l-5 3.500H5z" fill="#b6dcfa"/></g><g transform="translate(36 439)"><path d="M5 3l4-3h7v8l-4 3z" fill="#d4d4d4"/><path d="M0 8l4-3h7v8l-4 3H0z" fill="#c8c8c8"/><rect x="5" y="6" width="5" height="5" fill="#58b0f0"/></g><g transform="translate(36 461)"><path d="M4.500 0.500L8.500 8M0.500 4.500L10.500 8.500" stroke="#3f86e8" stroke-width="1.400" fill="none"/><circle cx="13.500" cy="8" r="2" fill="none" stroke="#3f86e8" stroke-width="1.100"/><circle cx="8" cy="13.500" r="2" fill="none" stroke="#3f86e8" stroke-width="1.100"/><path d="M10.500 8.500l1 0M8.500 8v3.500" stroke="#3f86e8" stroke-width="1.100"/></g><g transform="translate(36 483)"><circle cx="6" cy="11" r="4.300" fill="#f0101a"/><path d="M8 7.500C9 5 10 4.500 11.500 3.500" stroke="#111" stroke-width="1.600" fill="none"/><circle cx="11.700" cy="3" r="1.800" fill="#f09040"/><path d="M11.700 0v6M8.700 3h6M9.700 1l4 4M13.700 1l-4 4" stroke="#c87838" stroke-width="0.600"/></g><g transform="translate(36 505)"><rect x="1" y="4" width="11" height="11" fill="#000"/><rect x="2.500" y="5.500" width="8" height="8" fill="#fff"/><rect x="7.500" y="0.500" width="8" height="8" fill="none" stroke="#e8200a" stroke-width="1.100" stroke-dasharray="2.500 1.500"/></g><g transform="translate(36 527)"><path d="M4 5.500h8" stroke="#f0f0f0" stroke-width="1.300"/><path d="M10 3l3.500 2.500L10 8z" fill="#f0f0f0"/><path d="M14.500 1v12" stroke="#f0f0f0" stroke-width="1.300"/><path d="M0 9.500h4" stroke="#f0f0f0" stroke-width="1.200" stroke-dasharray="2 1"/><path d="M5 9.500h9" stroke="#4aa8f0" stroke-width="1.200" stroke-dasharray="2 1"/></g><g transform="translate(36 549)"><path d="M10 0L4.500 16" stroke="#3f96e8" stroke-width="1.400"/><path d="M0 8h6" stroke="#9a9ea6" stroke-width="1.600"/><path d="M9 8h7" stroke="#3f96e8" stroke-width="1.400" stroke-dasharray="1.500 1.500"/></g><g transform="translate(36 571)"><rect x="0.500" y="6.500" width="2.500" height="2.500" fill="#fff" stroke="#999" stroke-width="0.500"/><path d="M3 8h8" stroke="#e8e8e8" stroke-width="1"/><rect x="11.500" y="5.500" width="4.500" height="4.500" fill="none" stroke="#f2b482" stroke-width="1.100"/></g><g transform="translate(36 593)"><rect x="0" y="1" width="16" height="14" fill="#e8e8e8"/><rect x="0" y="1" width="16" height="1" fill="#999"/><rect x="3.500" y="5.500" width="12.500" height="9" fill="#000"/><rect x="0" y="5.500" width="3.500" height="9" fill="#8a8a8a"/><rect x="1" y="2.500" width="3" height="2" fill="#3b4453"/><rect x="6" y="2.500" width="3" height="2" fill="#3b4453"/><rect x="11" y="2.500" width="3" height="2" fill="#3b4453"/></g><g transform="translate(64 329)"><path d="M4 2.500L6.500 0.500h9.500v8L13.500 11H4z" fill="#000"/><path d="M6.500 1.500h8.500v7l-1.500 1.500z" fill="#fff"/><rect x="5" y="3" width="8" height="7" fill="#0000f0"/><rect x="0" y="11.500" width="4" height="4" fill="#000"/><rect x="1" y="12.500" width="2" height="2" fill="#f00"/></g><g transform="translate(64 351)"><path d="M0 5l6-4.500 3 1v7.500l-5.500 5H0z" fill="#000"/><path d="M1 5.500l2.500 0v7.500H1z" fill="#fff"/><path d="M3.500 5l4.500-3.500v7L3.500 13z" fill="#0000f0"/><path d="M1 5.500L5.500 1.500 8 1.500 3.500 5.500z" fill="#fff"/><rect x="9" y="9" width="6.500" height="6.500" fill="#000"/><rect x="11" y="11" width="2.500" height="2.500" fill="#f00"/></g><g transform="translate(64 373)"><rect x="0" y="0" width="4.500" height="4.500" fill="#f00" stroke="#000" stroke-width="0.500"/><path d="M6 6l6-4.500 3.500 1v7.500l-5.500 5H6z" fill="#000"/><path d="M7 6.500h2.500v7.500H7z" fill="#fff"/><path d="M9.500 6l5-3.500v7L9.500 14z" fill="#0000f0"/><path d="M7 6.500L11.500 2.500 14 2.500 9.500 6.500z" fill="#fff"/></g><g transform="translate(64 395)"><rect x="11.500" y="0" width="4.500" height="4.500" fill="#f00" stroke="#000" stroke-width="0.500"/><path d="M0 3l2-1 7 6v6l-3.500 2H0z" fill="#000"/><path d="M1 4l5 5.500V15L1 9.500z" fill="#0000f0"/><path d="M1 4l1.500-1 6 5.500v5L6 15V9.500z" fill="#fff"/><path d="M0 13l4 3H0z" fill="#fff"/></g><g transform="translate(64 417)"><rect x="0.700" y="0.700" width="13" height="13" fill="none" stroke="#d8d8d8" stroke-width="1.300"/><circle cx="11.500" cy="11" r="2.300" fill="#3b4453" stroke="#e8e8e8" stroke-width="1"/><path d="M13.200 12.800L16 15.500" stroke="#f2b482" stroke-width="1.300"/></g><g transform="translate(64 439)"><path d="M1 0v16M15.500 0v16" stroke="#e0e0e0" stroke-width="1.200"/><path d="M1 2.500h14.500M3 1v3M13.500 1v3" stroke="#e0e0e0" stroke-width="1"/><path d="M9.500 7L5.500 11.500h3L7 15l5-5H9l1.800-3z" fill="#f6c858"/></g><g transform="translate(64 461)"><path d="M0.500 4v9M15.500 4v9M0.500 5.500h15" stroke="#1f5a24" stroke-width="1.300" fill="none"/><path d="M4.500 3h7" stroke="#1f5a24" stroke-width="1.800" stroke-dasharray="1.500 0.700"/></g><g transform="translate(64 483)"><ellipse cx="8.500" cy="8" rx="3" ry="7.300" fill="none" stroke="#f0f0f0" stroke-width="1.100"/><path d="M1.500 5.500C-1 9 3 13 9 11.500S17 6 13.500 4" fill="none" stroke="#f0f0f0" stroke-width="1.100"/><path d="M2.500 4L0.500 8l3 2" fill="none" stroke="#f0f0f0" stroke-width="1"/><path d="M8.500 5.500v5M6 8h5" stroke="#7cc4f8" stroke-width="1.200"/><path d="M11 2.500l3 1-1 2.500" fill="none" stroke="#f0f0f0" stroke-width="1"/></g><g transform="translate(64 505)"><defs><radialGradient id="sph" cx="0.400" cy="0.350" r="0.700"><stop offset="0" stop-color="#fff"/><stop offset="0.600" stop-color="#d8d8d8"/><stop offset="1" stop-color="#9a9a9a"/></radialGradient></defs><circle cx="8.500" cy="7" r="6" fill="url(#sph)"/><path d="M2 14.500h13" stroke="#4a5364" stroke-width="1"/></g><g transform="translate(64 527)"><path d="M1 5l4-4h10.500v10.500l-4 4H1z" fill="none" stroke="#7cc4f8" stroke-width="1.600"/><path d="M1 5h10.500v10.500M11.500 5l4-4" fill="none" stroke="#7cc4f8" stroke-width="1.600"/><path d="M3.500 12.500l3-3v-2.500M6.500 9.500h2.500" stroke="#e8e8e8" stroke-width="0.900" fill="none"/><path d="M13 10l1 0" stroke="#e8e8e8" stroke-width="0.900"/></g><g transform="translate(64 549)"><path d="M0 4.500h4L6 2h5l2 2.500h3v9H0z" fill="#000"/><circle cx="7.500" cy="8.500" r="3.500" fill="#fff"/><circle cx="7.500" cy="8.500" r="2.400" fill="#000090"/><path d="M5 3l1.500-2" stroke="#20c0c0" stroke-width="0.800"/></g><g transform="translate(64 571)"><path d="M0 7.500L8 5l8 2.500v5L8 16l-8-3.500z" fill="#c8c8c8"/><path d="M0 7.500L8 11l8-3.500L8 5z" fill="#e4e4e4"/><path d="M8 11v5l8-3.500v-5z" fill="#b4b4b4"/><path d="M4.500 2.500h7v5.500a3.500 1.500 0 0 1-7 0z" fill="#58b0f0"/><ellipse cx="8" cy="2.500" rx="3.500" ry="1.700" fill="#8cd0fa"/></g><g transform="translate(64 593)"><rect x="0.700" y="0.700" width="13.600" height="14" fill="none" stroke="#d0d0d0" stroke-width="1.300"/><circle cx="6" cy="5.500" r="3.500" fill="#8a929e" stroke="#d8d8d8" stroke-width="0.800"/><rect x="7.500" y="6.500" width="6" height="4.500" fill="none" stroke="#3f96e8" stroke-width="1.400"/><path d="M16 11.500c0 3-2 4-5 4" fill="none" stroke="#58b0f0" stroke-width="1.400"/><path d="M12 13l-3 2.500 3 2z" fill="#58b0f0"/></g><g transform="translate(92 329)"><circle cx="8" cy="8" r="7.300" fill="none" stroke="#d0d2d6" stroke-width="1"/><rect x="6.200" y="6.200" width="3.600" height="3.600" fill="none" stroke="#f2b482" stroke-width="1.100"/></g><g transform="translate(92 351)"><path d="M7.500 0v8M0 11h5M10 11h5.500" stroke="#e0e0e0" stroke-width="1.100"/><rect x="5.500" y="8.700" width="4.500" height="4.500" fill="none" stroke="#f2b482" stroke-width="1.100"/></g><g transform="translate(92 373)"><circle cx="8" cy="8.500" r="5.500" fill="none" stroke="#aeb4bc" stroke-width="1"/><g fill="#3b4453" stroke="#f2b482" stroke-width="1.100"><rect x="6.300" y="0.600" width="3.400" height="3.400"/><rect x="6.300" y="12.800" width="3.400" height="3.400"/><rect x="0.300" y="6.800" width="3.400" height="3.400"/><rect x="12.300" y="6.800" width="3.400" height="3.400"/></g></g><g transform="translate(92 395)"><rect x="6" y="6" width="4.500" height="4.500" fill="none" stroke="#f2b482" stroke-width="1.100"/></g><g transform="translate(92 417)"><path d="M0.500 1v15M15.500 1v15" stroke="#e0e0e0" stroke-width="1.200"/><path d="M2 6h12" stroke="#58b0f0" stroke-width="1.200"/><path d="M1 6l3-1.500v3zM15 6l-3-1.500v3z" fill="#58b0f0"/></g><g transform="translate(92 439)"><path d="M1.500 3v5M14 3v5M1.500 5.500H14M3.500 4v3M12 4v3" stroke="#e0e0e0" stroke-width="1.100"/><rect x="1" y="10" width="14" height="4" fill="#f6c858"/><path d="M3 10v2M5 10v2M7 10v2M9 10v2M11 10v2M13 10v2" stroke="#b08820" stroke-width="0.600"/></g><g transform="translate(92 461)"><rect x="1" y="2" width="15" height="11" fill="#111"/><rect x="0.500" y="1" width="14" height="10.500" fill="#fff"/><rect x="1.500" y="2" width="12" height="8.500" fill="#fff" stroke="#e00" stroke-width="1.200"/></g><g transform="translate(92 483)"><path d="M8.500 1l6.500 3.500v7L8.500 15.500 2 11.500v-7z" fill="#1e78f0"/><path d="M8.500 1L15 4.500 8.500 8 2 4.500z" fill="#38a0ff"/><path d="M8.500 8v7.500L15 11.500v-7z" fill="#0a50d0"/><rect x="0.500" y="3" width="3" height="3" fill="none" stroke="#e00" stroke-width="1"/></g><g transform="translate(92 505)"><rect x="0.500" y="0.500" width="15.500" height="15" fill="#e0e0e0"/><rect x="1.500" y="1.500" width="13.500" height="13" fill="#000"/><path d="M8 1.500v13M1.500 8h13.500" stroke="#e8e8e8" stroke-width="1"/><path d="M3 10.500v3h3" stroke="#e8e8e8" stroke-width="0.700" fill="none"/></g><g transform="translate(92 527)"><path d="M0 3.500h5" stroke="#3f9cf0" stroke-width="1.600"/><path d="M4.500 0.500l4 3-4 3z" fill="#3f9cf0"/><path d="M4 7V16h12V5.500L12.500 2.500H9v4z" fill="#c4c4c4"/><path d="M12.500 2.500v3h3.500" fill="#e8e8e8"/><rect x="4" y="9.500" width="12" height="5" fill="#9a9a9a"/><text x="10" y="14" font-family="Liberation Sans, sans-serif" font-weight="bold" font-size="5" fill="#fff" text-anchor="middle">WMF</text></g><g transform="translate(92 549)"><rect x="1" y="0.500" width="14" height="4" fill="#000"/><path d="M2 2.500h12" stroke="#aaa" stroke-width="0.800" stroke-dasharray="1.500 1"/><path d="M2.500 5h12.500v10.500H2.500z" fill="#f09a30"/><circle cx="10" cy="10.500" r="3.300" fill="#e8e8e8"/><circle cx="10" cy="10.500" r="1.500" fill="#f09a30"/><rect x="2.500" y="5" width="12.500" height="1.500" fill="#f8c080"/></g><g transform="translate(92 571)"><rect x="2" y="1.500" width="14" height="14.500" fill="#000"/><rect x="0.500" y="0.500" width="14" height="14" fill="#fff" stroke="#c0c0c0" stroke-width="0.600"/><rect x="2" y="2" width="11" height="11" fill="none" stroke="#2a5cb0" stroke-width="1.200"/><path d="M4 4h5l2 2v6H4z" fill="#b8d8e0"/><path d="M11.500 4v1M11.500 6.500v1M11.500 9v1" stroke="#555" stroke-width="1"/></g><g transform="translate(92 593)"><rect x="4" y="0.500" width="11" height="4" fill="#700010"/><rect x="6" y="3" width="9.500" height="5.500" fill="#f4f4f4"/><rect x="0.500" y="8.500" width="10" height="3" fill="#0a6a1a"/><rect x="2" y="10.500" width="10" height="4.500" fill="#a0a0a0"/><path d="M4 4v5M12 8l2 2v3M13 6l1.500 0" stroke="#c8c8c8" stroke-width="0.800" fill="none"/></g></svg>
<!-- ===== stair dropdown panel ===== -->
<div class="abs pan" style="left:4px;top:176px;width:504px;height:144px;border-right:2px solid #222933;border-bottom:1px solid #222933;"></div>
<svg class="abs" style="left:0;top:180px" width="510" height="40" viewBox="0 180 510 40">
<use href="#stair1" x="13.200" y="97.800"/>
<!-- straight landing stairs -->
<path d="M97.500 207L124.500 183.500 128.800 186 101.800 211z" fill="#aeb0b4"/>
<path d="M97.500 207L124.500 183.500M101.800 211L128.800 186" stroke="#e4e4e4" stroke-width="1"/>
<path d="M99.500 209L126.500 184.700" stroke="#7a7c80" stroke-width="1.200"/>
<path d="M110 196l5 3.500" stroke="#f4f4f4" stroke-width="2.500"/>
<path d="M128.800 186v4l-4 3.500M97.500 207v3l4.300 2.500" fill="none" stroke="#8a8c90" stroke-width="0.800"/>
<!-- spiral -->
<rect x="180.800" y="190.500" width="5.500" height="21.500" rx="1.500" fill="#e6e6e6"/>
<path d="M186.500 185Q191 190 190.500 196 188 202 175.500 203.500" fill="none" stroke="#8c8e92" stroke-width="3"/>
<path d="M174.500 201.500Q184 206.500 191.500 199" fill="none" stroke="#1a1a1a" stroke-width="1.600"/>
<path d="M186.500 186Q189.500 190 189.200 195" fill="none" stroke="#d8d8d8" stroke-width="1"/>
<path d="M186.300 204v8" stroke="#9a9a9a" stroke-width="1.500"/>
<!-- curved stair -->
<path d="M243.500 185.500Q249.500 198 241 211.500L238 209.500Q244.500 198 241 187z" fill="#b4b6ba"/>
<path d="M246.800 184.500Q252.500 198 243.500 212" fill="none" stroke="#5a5c60" stroke-width="1.100"/>
<path d="M241 187Q244.500 198 238 209.500" fill="none" stroke="#e8e8e8" stroke-width="0.800"/>
<path d="M242 190l4-1M243 194l4.500-0.500M243.300 198l4.500 0.500M242.500 202l4 1.200M241 206l3.500 1.800" stroke="#eee" stroke-width="0.700"/>
<!-- escalator -->
<path d="M299.500 209.500L318.500 185.500 322 187.500 303 212z" fill="#8e9094"/>
<path d="M299.500 209.500L318.500 185.500M303 212L322 187.500M301.300 210.800L320.200 186.500" stroke="#d0d0d0" stroke-width="0.800"/>
<!-- entry straight stairs -->
<path d="M376.100 195L392 185.900 405.600 199.500 389.700 210.900 376.100 203z" fill="#ececec"/>
<path d="M376.100 195L381.500 198.500 389.700 210.900 376.100 203z" fill="#fafafa"/>
<path d="M381.500 198.500L396.500 189.500M383.300 201L398.500 192M385 203.500L400.500 194.500M386.700 206L402.500 196.800M388.300 208.500L404.300 198.600" stroke="#909090" stroke-width="0.700"/>
<path d="M389.700 210.900L405.600 199.500" stroke="#a0a0a0" stroke-width="0.700"/>
<!-- combined stairs -->
<path d="M452.800 204.100L463.500 195 472.500 187.500 480.900 192.700 472 201 462.300 209.800z" fill="#f4f4f4"/>
<path d="M464.500 194.200L473.500 199.600M465.800 193L474.800 198.400M467.200 191.900L476 197.200M468.600 190.700L477.300 196M470 189.600L478.500 194.900" stroke="#808080" stroke-width="0.700"/>
<path d="M452.800 204.100L462.300 209.800 462.300 211 452.800 205.200z" fill="#a8a8a8"/>
</svg>

<div class="t" style="left:8px;top:217px;width:70px;"><span class="k">복</span><span class="k">선</span> <span class="k">참</span><span class="k">계</span><span class="k">단</span></div>
<div class="t" style="left:78px;top:217px;width:70px;"><span class="k">직</span><span class="k">선</span> <span class="k">참</span><span class="k">계</span><span class="k">단</span></div>
<div class="t" style="left:148px;top:217px;width:70px;"><span class="k">나</span><span class="k">선</span><span class="k">형</span> <span class="k">계</span><span class="k">단</span></div>
<div class="t" style="left:218px;top:217px;width:54px;"><span class="k">곡</span><span class="k">선</span><span class="k">계</span><span class="k">단</span></div>
<div class="t" style="left:272px;top:217px;width:78px;"><span class="k">에</span><span class="k">스</span><span class="k">컬</span><span class="k">레</span><span class="k">이</span><span class="k">트</span></div>
<div class="t" style="left:350px;top:217px;width:82px;"><span class="k">현</span><span class="k">관</span> <span class="k">직</span><span class="k">선</span><span class="k">계</span><span class="k">단</span></div>
<div class="t" style="left:432px;top:217px;width:70px;"><span class="k">조</span><span class="k">합</span><span class="k">형</span> <span class="k">계</span><span class="k">단</span></div>
<!-- description rows -->
<div class="t l" style="left:32px;top:257px;"><span class="k">설</span><span class="k">명</span>_<span class="k">복</span><span class="k">선</span> <span class="k">참</span> <span class="k">계</span><span class="k">단</span></div>
<div class="t l" style="left:159px;top:257px;"><span class="k">설</span><span class="k">명</span>_<span class="k">직</span><span class="k">선</span> <span class="k">참</span> <span class="k">계</span><span class="k">단</span></div>
<div class="t l" style="left:286px;top:257px;"><span class="k">설</span><span class="k">명</span>_<span class="k">나</span><span class="k">선</span><span class="k">형</span> <span class="k">계</span><span class="k">단</span></div>
<div class="t l" style="left:32px;top:281px;"><span class="k">설</span><span class="k">명</span>_<span class="k">곡</span><span class="k">선</span> <span class="k">계</span><span class="k">단</span></div>
<div class="t l" style="left:143px;top:281px;"><span class="k">설</span><span class="k">명</span>_<span class="k">에</span><span class="k">스</span><span class="k">컬</span><span class="k">레</span><span class="k">이</span><span class="k">트</span></div>
<div class="t l" style="left:274px;top:281px;"><span class="k">설</span><span class="k">명</span>_<span class="k">현</span><span class="k">관</span> <span class="k">직</span><span class="k">선</span><span class="k">계</span><span class="k">단</span></div>
<div class="t l" style="left:409px;top:281px;"><span class="k">설</span><span class="k">명</span>_<span class="k">조</span><span class="k">합</span><span class="k">형</span> <span class="k">계</span><span class="k">단</span></div>
<div class="t" style="left:238px;top:302px;width:40px;"><span class="k">계</span><span class="k">단</span></div>
<svg class="abs" style="left:0;top:0" width="520" height="330" viewBox="0 0 520 330">
<g id="pl"><circle cx="18.500" cy="265.500" r="6.600" fill="#000"/><path d="M16 260.800v9.400l6.800-4.700z" fill="#fff"/></g>
<use href="#pl" x="128" y="0"/><use href="#pl" x="255" y="0"/>
<use href="#pl" x="0" y="24"/><use href="#pl" x="112" y="24"/><use href="#pl" x="243" y="24"/><use href="#pl" x="378" y="24"/>
</svg>
<!-- small highlighted button -->
<div class="abs" style="left:6px;top:302px;width:16px;height:17px;background:#4f6b8a;border:1px solid #6fb2e6;box-sizing:border-box;"></div>
<svg class="abs" style="left:8px;top:304px" width="13" height="13" viewBox="0 0 13 13"><circle cx="7.500" cy="5.500" r="4.500" fill="#c9cbce"/><circle cx="5" cy="8" r="4" fill="#9aa0a8"/></svg>
<!-- teal callout line -->
<div class="abs" style="left:29px;top:137px;width:3px;height:12px;background:#008585;"></div>
<div class="abs" style="left:29px;top:146px;width:264px;height:3px;background:#008585;"></div>
<div class="abs" style="left:291px;top:146px;width:2px;height:206px;background:#008585;"></div>
<!-- ===== dialog ===== -->
<div class="abs" style="left:151px;top:362px;width:438px;height:271px;background:#f0f0f0;border-radius:8px;box-shadow:0 0 0 1.500px #000;overflow:hidden;"><div style="height:31px;background:#f3f3f3;"></div></div>
<div class="t l" style="left:160px;top:368px;color:#9c9c9c;">3<span class="k">차</span><span class="k">원</span> <span class="k">계</span><span class="k">단</span> <span class="k">그</span><span class="k">리</span><span class="k">기</span></div>
<svg class="abs" style="left:568px;top:370px" width="12" height="12" viewBox="0 0 12 12"><path d="M1 1l10 10M11 1L1 11" stroke="#8a8a8a" stroke-width="1.100" fill="none"/></svg>
<div class="abs" style="left:158px;top:394px;width:226px;height:182px;background:#fff;border:1px solid;border-color:#a0a0a0 #fff #fff #a0a0a0;box-sizing:border-box;"></div><div class="abs" style="left:159px;top:395px;width:224px;height:180px;background:#000;"></div>
<svg class="abs" style="left:159px;top:395px" width="224" height="180" viewBox="159 395 224 180"><g transform="translate(155 391) scale(0.23015)"><path d="M57 290L247 180L322 224M247 180h22l55 30M57 290L197 368L365 278M57 290V302L197 380L365 290M197 368V380M440 192L548 128L815 282L650 378L535 312M815 282V295L655 390L650 378M330 195V265L365 282V212M365 282L570 296V225M335 262L365 278M372 262L515 268M540 300L535 312M385 266v-12M403 267v-12M421 267v-12M439 268v-12M457 269v-12M475 270v-12M493 270v-12M511 271v-12M535 315L650 378M523 320L638 383M650 378v12M650 378l-12 5M518 335L634 399M506 340L622 404M634 399v12M634 399l-12 5M501 354L618 420M489 359L606 425M618 420v12M618 420l-12 5M484 374L602 442M472 379L590 447M602 442v12M602 442l-12 5M467 393L586 463M455 398L574 468M586 463v12M586 463l-12 5M450 413L570 484M438 418L558 489M570 484v12M570 484l-12 5M433 433L554 505M421 438L542 510M554 505v12M554 505l-12 5M416 452L538 526M404 457L526 531M538 526v12M538 526l-12 5M399 472L522 548M387 477L510 553M522 548v12M522 548l-12 5M382 491L506 569M370 496L494 574M506 569v12M506 569l-12 5M365 511L490 590M655 390L495 605M535 315L365 510M360 462V522M372 468V512M197 620L362 524M490 590L325 685L197 620V632L325 697L495 605M325 685V697M490 590V605" fill="none" stroke="#fff" stroke-width="4.2"/><path d="M322 188L358 208L532 202L570 222L552 234L358 460" fill="none" stroke="#d2691e" stroke-width="9" stroke-linejoin="round" stroke-linecap="round"/><path d="M324 190L358 209L532 203L566 222L550 232L360 456" fill="none" stroke="#5a2a08" stroke-width="2.500"/><path d="M592 103L678 58M640 85L735 138M795 175L895 232M855 258L942 210M875 315L940 352M905 335L845 370M800 395L745 428M710 410L775 448M620 528L680 562M640 515L700 548M655 542L675 530M550 632L610 665M578 650L520 682M478 708L418 742M385 728L445 762M290 512L345 482M315 500V548M105 670L168 635M105 683L168 648" fill="none" stroke="#00ffff" stroke-width="4.400"/><circle cx="640" cy="84" r="5" fill="#00ffff"/><circle cx="748" cy="428" r="5" fill="#00ffff"/><g font-family="Liberation Sans, sans-serif" font-size="40" fill="#fff" text-anchor="middle"><text x="763" y="173" textLength="24" lengthAdjust="spacingAndGlyphs">A</text><text x="826" y="398" textLength="24" lengthAdjust="spacingAndGlyphs">B</text><text x="685" y="520" textLength="24" lengthAdjust="spacingAndGlyphs">C</text><text x="272" y="560" textLength="24" lengthAdjust="spacingAndGlyphs">D</text><text x="155" y="710" textLength="24" lengthAdjust="spacingAndGlyphs">E</text><text x="497" y="710" textLength="24" lengthAdjust="spacingAndGlyphs">B</text></g></g></svg>
<!-- group box -->
<div class="abs" style="left:391px;top:401px;width:192px;height:57px;border:1px solid #dcdcdc;box-sizing:border-box;border-radius:2px;"></div>
<div class="t l dk" style="left:397px;top:392px;background:#f0f0f0;padding:0 2px;"><span class="k">한</span><span class="k">쪽</span> <span class="k">계</span><span class="k">단</span><span class="k">의</span> <span class="k">갯</span><span class="k">수</span><span class="k">를</span> <span class="k">선</span><span class="k">택</span><span class="k">하</span><span class="k">세</span><span class="k">요</span>:</div>
<div class="rb" style="left:400px;top:428px;"></div><div class="t l dk" style="left:417px;top:427px;font-size:13px;letter-spacing:-1px;">7</div>
<div class="rb" style="left:434px;top:428px;border-color:#0067c0;background:#0067c0;"></div><div class="abs" style="left:438.500px;top:432.500px;width:4px;height:4px;border-radius:50%;background:#fff;"></div><div class="t l dk" style="left:450px;top:427px;font-size:13px;letter-spacing:-1px;">8</div>
<div class="rb" style="left:468px;top:428px;"></div><div class="t l dk" style="left:484px;top:427px;font-size:13px;letter-spacing:-1px;">9</div>
<div class="rb" style="left:502px;top:428px;"></div><div class="t l dk" style="left:519px;top:427px;font-size:13px;letter-spacing:-1px;">10</div>
<div class="rb" style="left:542px;top:428px;"></div><div class="t l dk" style="left:558px;top:427px;font-size:13px;letter-spacing:-1px;">11</div>
<div class="t l dk" style="left:391px;top:468px;">A: <span class="k">계</span><span class="k">단</span> <span class="k">전</span><span class="k">체</span><span class="k">의</span> <span class="k">폭</span>:</div><div class="inp" style="left:499px;top:467px;width:84px;">3000</div>
<div class="t l dk" style="left:391px;top:496px;">B: <span class="k">계</span><span class="k">단</span><span class="k">참</span><span class="k">의</span> <span class="k">길</span><span class="k">이</span>:</div><div class="inp" style="left:494px;top:496px;width:89px;">2500</div>
<div class="t l dk" style="left:391px;top:525px;">C: <span class="k">발</span><span class="k">판</span><span class="k">의</span> <span class="k">길</span><span class="k">이</span>:</div><div class="inp" style="left:483px;top:525px;width:100px;">300</div>
<div class="t l dk" style="left:391px;top:554px;">D: <span class="k">난</span><span class="k">간</span> <span class="k">손</span><span class="k">잡</span><span class="k">이</span><span class="k">의</span> <span class="k">높</span><span class="k">이</span>:</div><div class="inp" style="left:522px;top:554px;width:61px;">700</div>
<div class="t l dk" style="left:391px;top:583px;">E: <span class="k">계</span><span class="k">단</span><span class="k">의</span> <span class="k">두</span><span class="k">께</span>:</div><div class="inp" style="left:482px;top:583px;width:101px;">120</div>
<div class="t l dk" style="left:159px;top:584px;"><span class="k">벽</span><span class="k">체</span> <span class="k">높</span><span class="k">이</span>:</div><div class="inp" style="left:223px;top:584px;width:160px;">2600</div>
<div class="t l dk" style="left:159px;top:607px;letter-spacing:0.200px;">CYCAD FANTASMO</div>
<div class="abs" style="left:520px;top:607px;width:62px;height:19px;border:1px solid #0067c0;border-radius:4px;background:#fdfdfd;box-sizing:border-box;"></div>
<div class="t dk" style="left:520px;top:609px;width:62px;"><span class="k">확</span><span class="k">인</span></div>
<!-- ===== command window ===== -->
<div class="abs pan" style="left:4px;top:717px;width:1139px;height:4px;"></div>
<div class="abs" style="left:4px;top:721px;width:1139px;height:1px;background:#222933;"></div>
<div class="abs" style="left:4px;top:722px;width:25px;height:57px;background:#222933;"></div>
<div class="abs" style="left:29px;top:722px;width:1113px;height:36px;background:#c8c8c8;"></div>
<div class="abs" style="left:29px;top:758px;width:1113px;height:21px;background:#fff;border-top:1px solid #4a4f58;box-sizing:border-box;"></div>
<div class="abs pan" style="left:4px;top:779px;width:1139px;height:5px;"></div>
<div class="t l dk cm" style="left:31px;top:726px;font-family:'Liberation Mono',monospace;font-size:13px;letter-spacing:-1.300px;line-height:14px;"><span class="k">명</span><span class="k">령</span>:</div>
<div class="t l dk cm" style="left:31px;top:741px;font-family:'Liberation Mono',monospace;font-size:13px;letter-spacing:-1.300px;line-height:14px;"><span class="k">명</span><span class="k">령</span>: *<span class="k">취</span><span class="k">소</span>*</div>
<div class="t l cm" style="left:67px;top:760px;color:#8a8a8a;transform:skewX(-12deg);font-family:'Liberation Mono',monospace;font-size:13px;letter-spacing:-1.300px;"><span class="k">명</span><span class="k">령</span> <span class="k">입</span><span class="k">력</span></div>
<svg class="abs" style="left:6px;top:724px" width="22" height="55" viewBox="0 0 22 55">
<g fill="#e6e8ea"><rect x="2" y="2" width="1.500" height="1.500"/><rect x="5" y="2" width="1.500" height="1.500"/><rect x="8" y="2" width="1.500" height="1.500"/><rect x="11" y="2" width="1.500" height="1.500"/><rect x="14" y="2" width="1.500" height="1.500"/><rect x="17" y="2" width="1.500" height="1.500"/><rect x="2" y="5" width="1.500" height="1.500"/><rect x="5" y="5" width="1.500" height="1.500"/><rect x="8" y="5" width="1.500" height="1.500"/><rect x="11" y="5" width="1.500" height="1.500"/><rect x="14" y="5" width="1.500" height="1.500"/><rect x="17" y="5" width="1.500" height="1.500"/></g>
<path d="M6 16l8 8M14 16l-8 8" stroke="#e6e8ea" stroke-width="1.800" fill="none"/>
<path d="M3 52L11.500 43.500" stroke="#d8dadd" stroke-width="2.600" stroke-linecap="round" fill="none"/><path d="M10 41a4.500 4.500 0 0 1 6-5l-3 3 1 2.500 2.500 1 3-3a4.500 4.500 0 0 1-5 6z" fill="#d8dadd"/>
</svg>
<svg class="abs" style="left:33px;top:762px" width="30" height="15" viewBox="0 0 30 15"><rect x="0.500" y="0.500" width="15" height="12" fill="#e8e8e8" stroke="#555"/><rect x="0.500" y="0.500" width="15" height="2.500" fill="#555"/><path d="M3 6l2.500 2-2.500 2M7 10.500h4" stroke="#333" fill="none"/><path d="M19 5h7l-3.500 4z" fill="#555"/></svg>
<!-- ===== status bar ===== -->
<div class="abs" style="left:1px;top:784px;width:1145px;height:32px;background:#222933;"></div>
<svg class="abs" style="left:0;top:784px" width="520" height="32" viewBox="0 0 520 32">
<polygon points="46,24 56,0 103,0 93,24" fill="#3b4453"/>
<g fill="#e8e8e6"><rect x="20" y="6.500" width="16" height="2"/><rect x="20" y="11.500" width="16" height="2"/><rect x="20" y="16.500" width="16" height="2"/></g>
<path d="M149 20l6-16M207 20l6-16M245 20l6-16" stroke="#4a5364" stroke-width="1" fill="none"/>
<path d="M222 12h14M229 5v14" stroke="#f0f0f0" stroke-width="2" fill="none"/>
</svg>
<div class="t l" style="left:63px;top:788px;color:#fff;"><span class="k">모</span><span class="k">형</span></div>
<div class="t l" style="left:110px;top:788px;"><span class="k">배</span><span class="k">치</span>1</div>
<div class="t l" style="left:165px;top:788px;"><span class="k">배</span><span class="k">치</span>2</div>
<div class="sb" style="left:543px;width:26px;"></div>
<div class="t" style="left:543px;top:790px;width:26px;color:#fff;"><span class="k">모</span><span class="k">형</span></div>
<div class="sb" style="left:572px;width:64px;"></div>
<div class="sb sbon" style="left:573px;width:22px;"></div>
<div class="sb sbon" style="left:597px;width:22px;"></div>
<div class="sb" style="left:639px;width:104px;"></div>
<div class="sb sbon" style="left:640px;width:22px;"></div>
<div class="sb" style="left:745px;width:63px;"></div>
<div class="sb sbon" style="left:745px;width:23px;"></div>
<div class="sb" style="left:811px;width:106px;"></div>
<div class="sb sbon" style="left:812px;width:22px;"></div>
<div class="sb" style="left:920px;width:82px;"></div>
<div class="sb" style="left:1005px;width:23px;"></div>
<div class="sb" style="left:1032px;width:23px;"></div>
<div class="sb" style="left:1058px;width:30px;"></div>
<div class="sb" style="left:1091px;width:23px;"></div>
<div class="sb" style="left:1117px;width:23px;"></div>
<div class="arr" style="left:624px;top:796px;"></div>
<div class="arr" style="left:691px;top:796px;"></div>
<div class="arr" style="left:731px;top:796px;"></div>
<div class="arr" style="left:796px;top:796px;"></div>
<div class="arr" style="left:905px;top:796px;"></div>
<div class="arr" style="left:991px;top:796px;"></div>
<div class="t l" style="left:888px;top:790px;letter-spacing:-0.700px;font-size:12.500px;">1:1</div>
<div class="t l" style="left:949px;top:790px;font-size:12px;letter-spacing:-0.200px;">CYCAD</div>
<svg class="abs" style="left:540px;top:784px" width="607" height="32" viewBox="540 784 607 32">
<!-- grid -->
<path d="M580.500 789v18M587.500 789v18M575 794.500h18M575 801.500h18" stroke="#fff" stroke-width="1.300" fill="none"/>
<!-- snap dots -->
<g fill="#fff"><rect x="601" y="791" width="2" height="2"/><rect x="607" y="791" width="2" height="2"/><rect x="613" y="791" width="2" height="2"/><rect x="601" y="797" width="2" height="2"/><rect x="607" y="797" width="2" height="2"/><rect x="613" y="797" width="2" height="2"/><rect x="601" y="803" width="2" height="2"/><rect x="607" y="803" width="2" height="2"/><rect x="613" y="803" width="2" height="2"/></g>
<!-- ortho -->
<path d="M644 789.500v16.500h16M644 800.500h5.500v5.500" stroke="#fff" stroke-width="1.400" fill="none"/>
<!-- polar -->
<circle cx="674" cy="798.500" r="6.300" fill="none" stroke="#d8dadd" stroke-width="1.300"/><path d="M674 798.500h10M674 798.500l8.500-8" stroke="#d8dadd" stroke-width="1.300"/>
<!-- isodraft -->
<path d="M707.500 790L721 806" stroke="#e02828" stroke-width="1.300"/><path d="M714.500 788v19" stroke="#20c040" stroke-width="1.300"/><circle cx="714.500" cy="798" r="1.500" fill="#222933" stroke="#eee" stroke-width="0.800"/>
<!-- otrack -->
<path d="M749 806h16M749 806L764 791" stroke="#fff" stroke-width="1.500" fill="none"/><rect x="754.500" y="797.500" width="3" height="3" fill="#fff"/>
<!-- osnap -->
<rect x="775.500" y="793.500" width="13" height="12" fill="none" stroke="#e8e8e8" stroke-width="1.300"/><rect x="772.500" y="790.500" width="4" height="4" fill="#3b4453" stroke="#f2a068" stroke-width="1.200"/>
<!-- annotation A -->
<path d="M823 788.500l1.800 7.800 4.700-1.300-3.500 4.200 3.800 7.300-6.800-4.800-6.800 4.800 3.800-7.300-3.500-4.200 4.700 1.300z" fill="#fff"/><circle cx="830.500" cy="791" r="1.800" fill="none" stroke="#fff" stroke-width="1"/>
<path d="M846 788.500l1.800 7.800 4.700-1.300-3.500 4.200 3.800 7.300-6.800-4.800-6.800 4.800 3.800-7.300-3.500-4.200 4.700 1.300z" fill="#d8dadd"/><path d="M854.500 787.500l-2.500 3.500h2.500l-2 3" stroke="#d8dadd" stroke-width="1" fill="none"/>
<path d="M871 788.500l1.800 7.800 4.700-1.300-3.500 4.200 3.800 7.300-6.800-4.800-6.800 4.800 3.800-7.300-3.500-4.200 4.700 1.300z" fill="#d8dadd"/>
<!-- gear -->
<circle cx="931.500" cy="798" r="4.600" fill="none" stroke="#d8dadd" stroke-width="3.200"/><path d="M931.500 790v16M923.500 798h16M925.800 792.300l11.400 11.400M937.200 792.300l-11.400 11.400" stroke="#d8dadd" stroke-width="2.600"/><circle cx="931.500" cy="798" r="2.300" fill="#3b4453"/>
<!-- plus -->
<path d="M1008 798h16M1016 790v16" stroke="#f0f0f0" stroke-width="1.800"/>
<!-- shapes -->
<rect x="1036.500" y="790.500" width="5.500" height="5.500" fill="none" stroke="#e0e0e0" stroke-width="1.100"/><circle cx="1048.500" cy="796.500" r="3" fill="none" stroke="#e0e0e0" stroke-width="1.100"/><path d="M1041.500 799.500l3.500 6h-7z" fill="none" stroke="#e0e0e0" stroke-width="1.100"/>
<!-- image warn -->
<rect x="1064" y="790" width="16" height="13" fill="#6a7280"/><path d="M1065 798q3-6 6-1t4-2 4 3" fill="none" stroke="#cfd4da" stroke-width="1.100"/><path d="M1078.500 797.500l4.500 8.500h-9z" fill="#f09a50"/><path d="M1078.500 800.500v3" stroke="#fff" stroke-width="1"/>
<!-- fullscreen -->
<rect x="1095.500" y="792.500" width="15" height="11" fill="none" stroke="#e8e8e8" stroke-width="1.300"/><path d="M1105 794.500h3.500v3.500M1108.500 794.500l-3.500 3.500M1097.500 798v3.500h3.500M1097.500 801.500l3.500-3.500" stroke="#e8e8e8" stroke-width="1.100" fill="none"/>
<!-- hamburger -->
<g fill="#e8e8e6"><rect x="1121" y="791" width="16" height="2"/><rect x="1121" y="797" width="16" height="2"/><rect x="1121" y="803" width="16" height="2"/></g>
</svg>

</div></div>
</body>
</html>
